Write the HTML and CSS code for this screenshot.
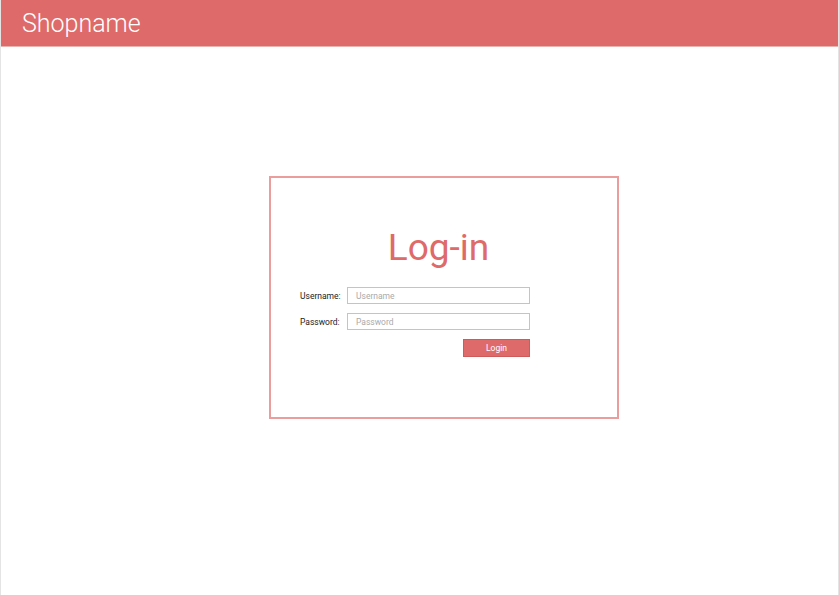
FILE: index.html
```html
<!DOCTYPE html>
<html>
<head>
<meta charset="utf-8">
<link rel="stylesheet" href="styles.css">
</head>
<body>
<div class="page">
  <header class="topbar"><span class="brand">Shopname</span></header>
  <main class="main">
    <section class="card">
      <h1 class="title">Log-in</h1>
      <form class="form">
        <div class="row">
          <label class="label">Username:</label>
          <input class="input" type="text" placeholder="Username">
        </div>
        <div class="row">
          <label class="label">Password:</label>
          <input class="input" type="password" placeholder="Password">
        </div>
        <div class="actions">
          <button class="btn" type="button">Login</button>
        </div>
      </form>
    </section>
  </main>
</div>
</body>
</html>
```

FILE: styles.css
```css
* { box-sizing: border-box; }
html, body { margin: 0; padding: 0; background: #fff; }
body { font-family: Roboto, "Liberation Sans", sans-serif; }
.page {
  width: 839px;
  height: 595px;
  border-left: 1px solid #e4e4e4;
  border-right: 1px solid #e4e4e4;
  display: flex;
  flex-direction: column;
}
.topbar {
  height: 47px;
  background: #df6a6a;
  border-bottom: 1px solid #e9b3b0;
  display: flex;
  align-items: center;
  padding-left: 21px;
}
.brand {
  color: #fff;
  font-size: 25px;
  font-weight: 300;
  line-height: 1;
  margin-top: 1px;
}
.main {
  padding-top: 129px;
  padding-left: 268px;
}
.card {
  width: 350px;
  height: 243px;
  border: 2px solid #eb9c9c;
  padding: 48px 0 0 29px;
}
.title {
  margin: 0 0 17px 0;
  padding-right: 40px;
  text-align: center;
  font-size: 37px;
  font-weight: 400;
  color: #df6a6a;
  line-height: 44px;
}
.form { width: 230px; display: flex; flex-direction: column; gap: 9px; }
.row { display: flex; align-items: center; }
.label {
  width: 47px;
  font-size: 8.5px;
  color: #222;
}
.input {
  width: 183px;
  height: 17px;
  border: 1px solid #c4c4c4;
  border-radius: 0;
  padding: 0 8px;
  font-family: Roboto, "Liberation Sans", sans-serif;
  font-size: 8.5px;
  outline: none;
}
.input::placeholder { color: #aaa; }
.actions { display: flex; justify-content: flex-end; }
.btn {
  width: 67px;
  height: 18px;
  background: #df6a6a;
  border: 1px solid #cf5a5a;
  color: #fff;
  font-family: Roboto, "Liberation Sans", sans-serif;
  font-size: 8.5px;
  padding: 0;
}
```
